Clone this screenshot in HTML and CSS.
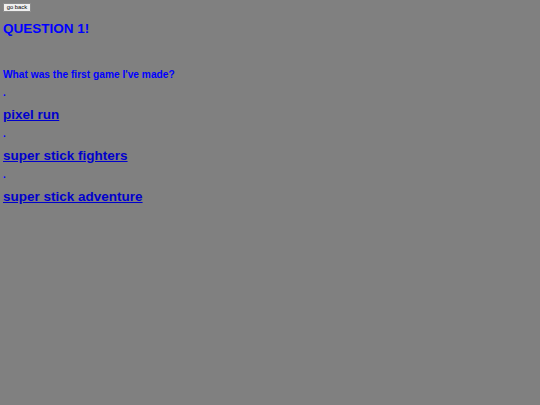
FILE: index.html
```html
<!DOCTYPE html>
<html>
<head>
<meta charset="utf-8">
<link rel="stylesheet" href="styles.css">
</head>
<body>
<div class="page">
  <button class="back">go back</button>
  <h1 class="title">QUESTION 1!</h1>
  <h3 class="question">What was the first game I've made?</h3>
  <div class="option">
    <p class="dot">.</p>
    <h2 class="answer"><a href="#">pixel run</a></h2>
  </div>
  <div class="option">
    <p class="dot">.</p>
    <h2 class="answer"><a href="#">super stick fighters</a></h2>
  </div>
  <div class="option">
    <p class="dot">.</p>
    <h2 class="answer"><a href="#">super stick adventure</a></h2>
  </div>
</div>
</body>
</html>
```
FILE: styles.css
```css
html, body {
  margin: 0;
  padding: 0;
  background: #808080;
}
body {
  font-family: "Liberation Sans", Arial, sans-serif;
  color: #0000ff;
}
.page {
  padding: 3px 3px;
}
.back {
  display: block;
  margin: 0;
  height: 9px;
  padding: 0 2.8px;
  font-family: "Liberation Sans", Arial, sans-serif;
  font-size: 5.8px;
  line-height: 7px;
  color: #000;
  background: #efefef;
  border: 1px solid #8a8a8a;
  border-radius: 1px;
}
.title {
  margin: 8.8px 0 0;
  font-size: 13.5px;
  line-height: 16px;
  font-weight: bold;
}
.question {
  margin: 31.8px 0 0;
  font-size: 10.2px;
  line-height: 12px;
  font-weight: bold;
}
.option {
  margin: 0;
}
.option + .option .dot {
  margin-top: 4.7px;
}
.dot {
  margin: 6.1px 0 0;
  font-size: 10px;
  line-height: 12px;
  font-weight: bold;
}
.answer {
  margin: 8.3px 0 0;
  font-size: 13.5px;
  line-height: 16px;
  font-weight: bold;
}
.answer a {
  color: #0000cc;
  text-decoration: underline;
}
```
